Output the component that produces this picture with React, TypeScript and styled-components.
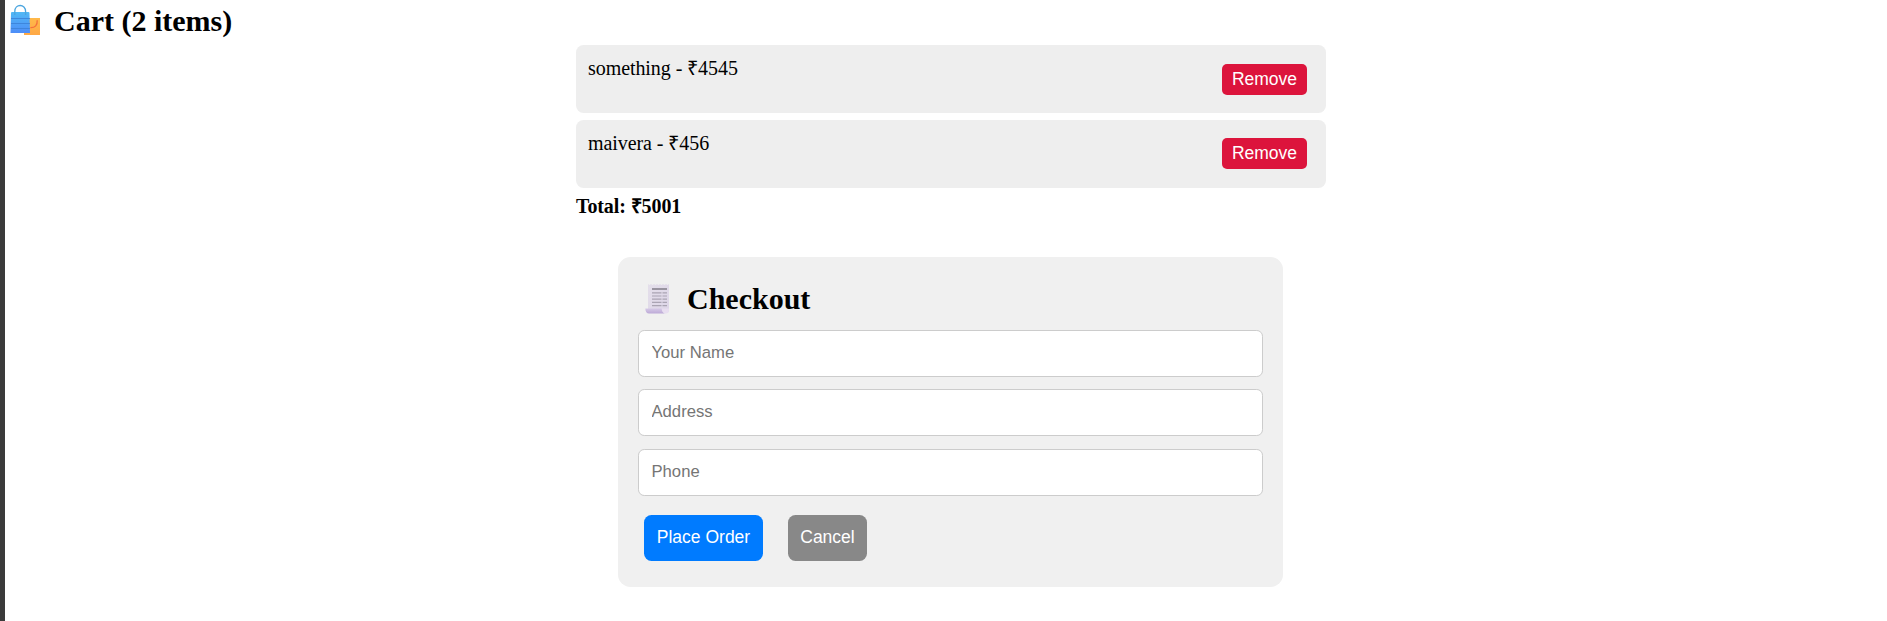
import React from "react";
import styled, { createGlobalStyle } from "styled-components";

const GlobalStyle = createGlobalStyle`
  * { box-sizing: border-box; }
  body {
    margin: 0;
    background: #fff;
    color: #000;
    font-family: "Liberation Serif", "Times New Roman", serif;
    font-size: 20px;
    overflow: hidden;
  }
`;

const Page = styled.main`
  min-height: 621px;
  border-left: 5px solid #3b3b3b;
`;

const Content = styled.div`
  padding-left: 10px;
`;

const Heading = styled.h2<{ $checkout?: boolean }>`
  display: flex;
  align-items: center;
  gap: ${(p) => (p.$checkout ? 12 : 10)}px;
  margin: 0;
  padding-left: 5px;
  height: ${(p) => (p.$checkout ? 33 : 45)}px;
  padding-bottom: ${(p) => (p.$checkout ? 0 : 5)}px;
  font-size: 30px;
  line-height: 35px;
  font-weight: bold;
  white-space: pre;

  svg { flex: none; }
`;

const CartList = styled.ul`
  list-style: none;
  width: 750px;
  margin: 0 auto;
  padding: 0;
  display: flex;
  flex-direction: column;
  gap: 7px;
`;

const CartItem = styled.li`
  display: flex;
  justify-content: space-between;
  height: 68px;
  padding: 12px 19px 12px 12px;
  background: #eee;
  border-radius: 7.5px;
  line-height: 23px;
  letter-spacing: -0.07px;
`;

const RemoveButton = styled.button<{ $offset: number }>`
  width: 85px;
  height: 31px;
  margin: ${(p) => p.$offset}px 0 0;
  padding: 0;
  border: 0;
  border-radius: 5px;
  background: crimson;
  color: #fff;
  font: 17.5px "Liberation Sans", Arial, sans-serif;
`;

const Total = styled.p`
  width: 750px;
  margin: 7px auto 0;
  font-weight: bold;
  line-height: 23px;
  letter-spacing: -0.1px;
`;

const CheckoutCard = styled.section`
  width: 665px;
  height: 330px;
  margin: 39px 0 0 calc(50% - 333px);
  padding: 25px 20px;
  background: #f0f0f0;
  border-radius: 12.5px;
`;

const Fields = styled.div`
  display: flex;
  flex-direction: column;
  gap: 12px;
  margin-top: 15px;
`;

const Field = styled.input`
  width: 100%;
  height: 47px;
  padding: 0 12.5px 1px;
  border: 1px solid #ccc;
  border-radius: 6.25px;
  background: #fff;
  font: 16.67px "Liberation Sans", Arial, sans-serif;

  &:last-child { margin-top: 1px; }
  &::placeholder { color: #757575; opacity: 1; }
`;

const Actions = styled.div`
  display: flex;
  gap: 25px;
  margin: 19px 0 0 6px;
`;

const ActionButton = styled.button<{ $tone: string; $width: number }>`
  width: ${(p) => p.$width}px;
  height: 46px;
  padding: 0 0 2px;
  border: 0;
  border-radius: 7.5px;
  background: ${(p) => p.$tone};
  color: #fff;
  font: 17.5px "Liberation Sans", Arial, sans-serif;
`;

const BagsIcon = () => (
  <svg width="34" height="34" viewBox="0 0 34 34" aria-hidden="true">
    <defs>
      <linearGradient id="bag" x2="0" y2="1">
        <stop stopColor="#51b9f5" />
        <stop offset="1" stopColor="#4d8df8" />
      </linearGradient>
      <linearGradient id="small" x2="0" y2="1">
        <stop stopColor="#ffb94a" />
        <stop offset="1" stopColor="#ffa845" />
      </linearGradient>
    </defs>
    <path d="M14 15h16v17H14z" fill="url(#small)" />
    <path d="M27.2 17.2c.3 5-2 7.6-6.8 7.4" fill="none" stroke="#f3703c" strokeWidth="1.3" />
    <path d="M1 10q0-1 1-1h16.5q1 0 1 1l.5 20H.5z" fill="url(#bag)" />
    <path d="M1 15.5h19M1 20.5h19M1 25.5h19" stroke="#3c83d8" strokeWidth=".9" />
    <path d="M4.8 12V8.5c0-8 10.8-8 10.8 0V12" fill="none" stroke="#4aa5df" strokeWidth="1.3" />
  </svg>
);

const ReceiptIcon = () => (
  <svg width="32" height="34" viewBox="0 0 32 34" aria-hidden="true">
    <defs>
      <linearGradient id="paper" x2="1" y2="1">
        <stop stopColor="#e4dfea" />
        <stop offset="1" stopColor="#ddd5e8" />
      </linearGradient>
      <linearGradient id="roll" x2="0" y2="1">
        <stop stopColor="#d5c9e6" />
        <stop offset="1" stopColor="#bda9d7" />
      </linearGradient>
    </defs>
    <path d="M5 2l1.5 1L8 2l1.5 1L11 2l1.5 1L14 2l1.5 1L17 2l1.5 1L20 2l1.5 1L23 2l1.5 1L26 2v26q0 3-3 3H5z" fill="url(#paper)" />
    <path d="M2.3 26.5h16.5c0 3 1.5 5 4 5H6c-2.2 0-3.7-2-3.7-5z" fill="url(#roll)" />
    <path d="M18.7 26.5H26V28c0 2-1 3.5-3 3.5s-4.3-2-4.3-5z" fill="#e8def0" />
    <path d="M9 7h15" stroke="#9994a0" strokeWidth="2" />
    <path d="M9 10.8h9.5M19.5 10.8H24M9 14h9.5M19.5 14H24M9 17.2h9.5M19.5 17.2H24M9 20.4h9.5M19.5 20.4H24M9 23.6h9.5M19.5 23.6H24" stroke="#aaa4b3" strokeWidth="1.2" />
  </svg>
);

const items = [
  { name: "something", price: 4545 },
  { name: "maivera", price: 456 },
];

export default function App() {
  return (
    <Page>
      <GlobalStyle />
      <Heading><BagsIcon />Cart (2 items)</Heading>
      <Content>
        <CartList>
          {items.map((item, index) => (
            <CartItem key={item.name}>
              <span>{item.name} - ₹{item.price}</span>
              <RemoveButton $offset={7 - index}>Remove</RemoveButton>
            </CartItem>
          ))}
        </CartList>
        <Total>Total: ₹5001</Total>
        <CheckoutCard>
          <Heading $checkout><ReceiptIcon />Checkout</Heading>
          <Fields>
            <Field placeholder="Your Name" />
            <Field placeholder="Address" />
            <Field placeholder="Phone" />
          </Fields>
          <Actions>
            <ActionButton $tone="#007bff" $width={119}>Place Order</ActionButton>
            <ActionButton $tone="#888" $width={79}>Cancel</ActionButton>
          </Actions>
        </CheckoutCard>
      </Content>
    </Page>
  );
}
